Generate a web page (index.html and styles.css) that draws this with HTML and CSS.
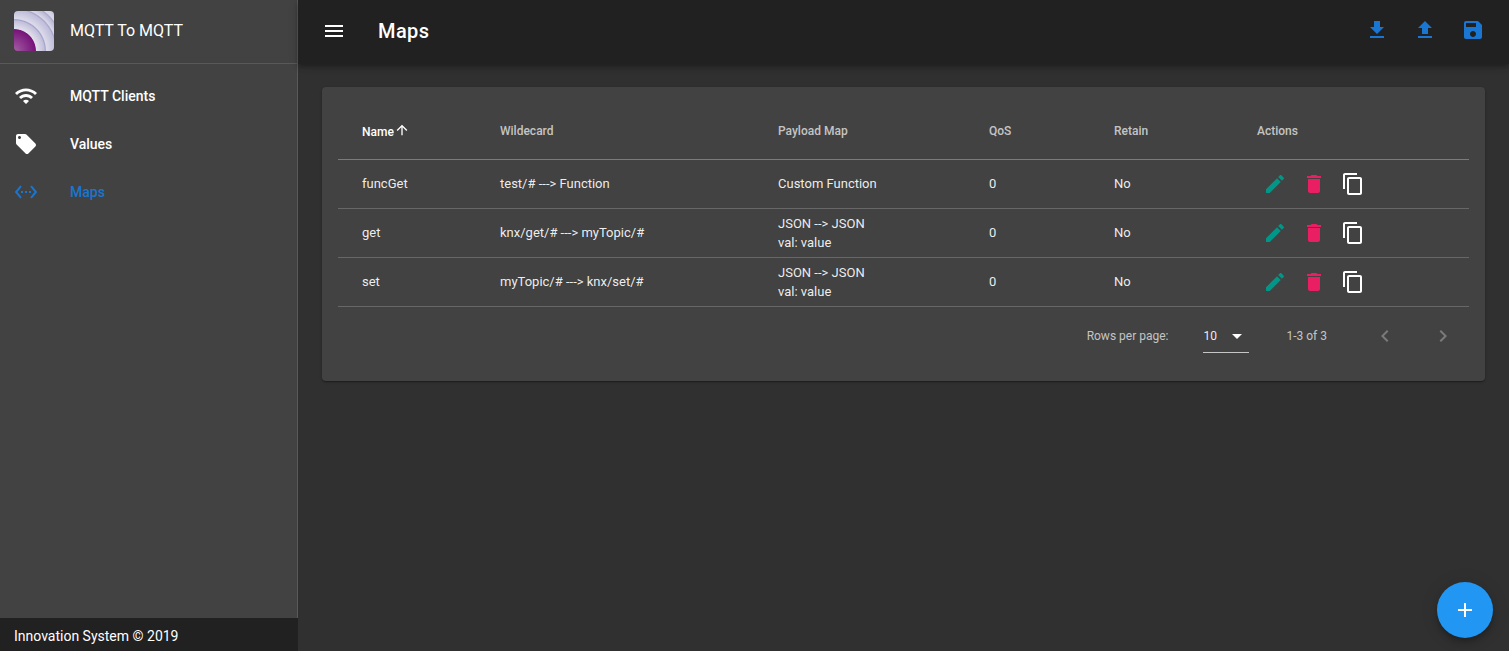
FILE: index.html
```html
<!DOCTYPE html>
<html>
<head>
    <meta charset="utf-8">
    <meta name="viewport" content="width=device-width, initial-scale=1.0">
    <title>MQTT To MQTT</title>
    <link rel="stylesheet" href="styles.css">
</head>
<body>
    <svg class="icon-defs" width="0" height="0">
        <symbol id="i-edit" viewBox="0 0 24 24"><path d="M3 17.25V21h3.75L17.81 9.94l-3.75-3.75L3 17.25zM20.71 7.04c.39-.39.39-1.02 0-1.41l-2.34-2.34c-.39-.39-1.02-.39-1.41 0l-1.83 1.83 3.75 3.75 1.83-1.83z"/></symbol>
        <symbol id="i-delete" viewBox="0 0 24 24"><path d="M6 19c0 1.1.9 2 2 2h8c1.1 0 2-.9 2-2V7H6v12zM19 4h-3.5l-1-1h-5l-1 1H5v2h14V4z"/></symbol>
        <symbol id="i-copy" viewBox="0 0 24 24"><path d="M16 1H4c-1.1 0-2 .9-2 2v14h2V3h12V1zm3 4H8c-1.1 0-2 .9-2 2v14c0 1.1.9 2 2 2h11c1.1 0 2-.9 2-2V7c0-1.1-.9-2-2-2zm0 16H8V7h11v14z"/></symbol>
    </svg>

    <div class="app">
        <aside class="sidebar">
            <div class="sidebar-main">
                <div class="brand">
                    <svg class="logo" viewBox="0 0 40 40">
                        <defs>
                            <radialGradient id="logo-bands" gradientUnits="userSpaceOnUse" cx="0" cy="40" r="58">
                                <stop offset="0" stop-color="#a45ea4"/>
                                <stop offset="0.37" stop-color="#761379"/>
                                <stop offset="0.385" stop-color="#e2dfec"/>
                                <stop offset="0.52" stop-color="#c2c0da"/>
                                <stop offset="0.54" stop-color="#a3a1c8"/>
                                <stop offset="0.56" stop-color="#dcdaea"/>
                                <stop offset="0.71" stop-color="#bfbdd9"/>
                                <stop offset="0.73" stop-color="#a6a4ca"/>
                                <stop offset="0.75" stop-color="#d9d7e8"/>
                                <stop offset="0.83" stop-color="#bcbad6"/>
                                <stop offset="0.85" stop-color="#a9a7cc"/>
                                <stop offset="0.87" stop-color="#d9d7e8"/>
                                <stop offset="1" stop-color="#c0bedb"/>
                            </radialGradient>
                        </defs>
                        <rect width="40" height="40" rx="4" fill="url(#logo-bands)"/>
                    </svg>
                    <span class="brand-name">MQTT To MQTT</span>
                </div>
                <nav class="nav">
                    <a href="#" class="nav-item">
                        <svg class="nav-icon" viewBox="0 0 24 24"><path d="M1 9l2 2c4.97-4.97 13.03-4.97 18 0l2-2C16.93 2.93 7.08 2.93 1 9zm8 8l3 3 3-3c-1.65-1.66-4.34-1.66-6 0zm-4-4l2 2c2.76-2.76 7.24-2.76 10 0l2-2C15.14 9.14 8.87 9.14 5 13z"/></svg>
                        <span>MQTT Clients</span>
                    </a>
                    <a href="#" class="nav-item">
                        <svg class="nav-icon" viewBox="0 0 24 24"><path d="M21.41 11.58l-9-9C12.05 2.22 11.55 2 11 2H4c-1.1 0-2 .9-2 2v7c0 .55.22 1.05.59 1.42l9 9c.36.36.86.58 1.41.58.55 0 1.05-.22 1.41-.59l7-7c.37-.36.59-.86.59-1.41 0-.55-.23-1.06-.59-1.42zM5.5 7C4.67 7 4 6.33 4 5.5S4.67 4 5.5 4 7 4.67 7 5.5 6.33 7 5.5 7z"/></svg>
                        <span>Values</span>
                    </a>
                    <a href="#" class="nav-item active">
                        <svg class="nav-icon" viewBox="0 0 24 24"><path d="M7.77 6.76L6.23 5.48.82 12l5.41 6.52 1.54-1.28L3.42 12l4.35-5.24zM7 13h2v-2H7v2zm10-2h-2v2h2v-2zm-6 2h2v-2h-2v2zm6.77-7.52l-1.54 1.28L20.58 12l-4.35 5.24 1.54 1.28L23.18 12l-5.41-6.52z"/></svg>
                        <span>Maps</span>
                    </a>
                </nav>
            </div>
            <div class="sidebar-footer">Innovation System © 2019</div>
        </aside>

        <div class="content">
            <header class="topbar">
                <svg class="menu-icon" viewBox="0 0 24 24"><path d="M3 18h18v-2H3v2zm0-5h18v-2H3v2zm0-7v2h18V6H3z"/></svg>
                <h1 class="page-title">Maps</h1>
                <div class="topbar-actions">
                    <button class="topbar-button"><svg viewBox="0 0 24 24"><path d="M19 9h-4V3H9v6H5l7 7 7-7zM5 18v2h14v-2H5z"/></svg></button>
                    <button class="topbar-button"><svg viewBox="0 0 24 24"><path d="M9 16h6v-6h4l-7-7-7 7h4zm-4 2h14v2H5z"/></svg></button>
                    <button class="topbar-button"><svg viewBox="0 0 24 24"><path d="M17 3H5c-1.11 0-2 .9-2 2v14c0 1.1.89 2 2 2h14c1.1 0 2-.9 2-2V7l-4-4zm-5 16c-1.66 0-3-1.34-3-3s1.34-3 3-3 3 1.34 3 3-1.34 3-3 3zm3-10H5V5h10v4z"/></svg></button>
                </div>
            </header>

            <main class="main">
                <section class="card">
                    <table class="maps-table">
                        <colgroup>
                            <col class="col-name">
                            <col class="col-wildcard">
                            <col class="col-payload">
                            <col class="col-qos">
                            <col class="col-retain">
                            <col>
                        </colgroup>
                        <thead>
                            <tr>
                                <th class="sorted">Name<svg class="sort-icon" viewBox="0 0 24 24"><path d="M4 12l1.41 1.41L11 7.83V20h2V7.83l5.58 5.59L20 12l-8-8-8 8z"/></svg></th>
                                <th>Wildecard</th>
                                <th>Payload Map</th>
                                <th>QoS</th>
                                <th>Retain</th>
                                <th>Actions</th>
                            </tr>
                        </thead>
                        <tbody>
                            <tr>
                                <td>funcGet</td>
                                <td>test/# ---&gt; Function</td>
                                <td>Custom Function</td>
                                <td>0</td>
                                <td>No</td>
                                <td>
                                    <div class="actions">
                                        <svg class="action edit"><use href="#i-edit"/></svg>
                                        <svg class="action delete"><use href="#i-delete"/></svg>
                                        <svg class="action copy"><use href="#i-copy"/></svg>
                                    </div>
                                </td>
                            </tr>
                            <tr>
                                <td>get</td>
                                <td>knx/get/# ---&gt; myTopic/#</td>
                                <td>JSON --&gt; JSON<br>val: value</td>
                                <td>0</td>
                                <td>No</td>
                                <td>
                                    <div class="actions">
                                        <svg class="action edit"><use href="#i-edit"/></svg>
                                        <svg class="action delete"><use href="#i-delete"/></svg>
                                        <svg class="action copy"><use href="#i-copy"/></svg>
                                    </div>
                                </td>
                            </tr>
                            <tr>
                                <td>set</td>
                                <td>myTopic/# ---&gt; knx/set/#</td>
                                <td>JSON --&gt; JSON<br>val: value</td>
                                <td>0</td>
                                <td>No</td>
                                <td>
                                    <div class="actions">
                                        <svg class="action edit"><use href="#i-edit"/></svg>
                                        <svg class="action delete"><use href="#i-delete"/></svg>
                                        <svg class="action copy"><use href="#i-copy"/></svg>
                                    </div>
                                </td>
                            </tr>
                        </tbody>
                    </table>
                    <div class="pagination">
                        <span class="rows-label">Rows per page:</span>
                        <div class="rows-select">
                            <span>10</span>
                            <svg viewBox="0 0 24 24"><path d="M7 10l5 5 5-5z"/></svg>
                        </div>
                        <span class="page-range">1-3 of 3</span>
                        <svg class="page-arrow prev" viewBox="0 0 24 24"><path d="M15.41 7.41L14 6l-6 6 6 6 1.41-1.41L10.83 12z"/></svg>
                        <svg class="page-arrow next" viewBox="0 0 24 24"><path d="M10 6L8.59 7.41 13.17 12l-4.58 4.58L10 18l6-6z"/></svg>
                    </div>
                </section>
            </main>
        </div>
    </div>

    <button class="fab"><svg viewBox="0 0 24 24"><path d="M19 13h-6v6h-2v-6H5v-2h6V5h2v6h6v2z"/></svg></button>
</body>
</html>
```

FILE: styles.css
```css
* {
    box-sizing: border-box;
}

html, body {
    height: 100%;
}

body {
    font-family: Roboto, "Liberation Sans", sans-serif;
    margin: 0;
    padding: 0;
    background-color: #303030;
    color: #ffffff;
    overflow: hidden;
}

svg {
    fill: currentColor;
}

.icon-defs {
    position: absolute;
}

.app {
    display: flex;
    height: 100%;
}

/* sidebar */

.sidebar {
    width: 298px;
    flex-shrink: 0;
    display: flex;
    flex-direction: column;
    background-color: #424242;
}

.sidebar-main {
    flex: 1;
    border-right: 1px solid rgba(255, 255, 255, 0.12);
}

.brand {
    display: flex;
    align-items: center;
    height: 64px;
    padding: 0 14px 2px;
    border-bottom: 1px solid rgba(255, 255, 255, 0.12);
}

.logo {
    width: 40px;
    height: 40px;
    margin-right: 16px;
}

.brand-name {
    font-size: 16px;
}

.nav {
    padding-top: 8px;
}

.nav-item {
    display: flex;
    align-items: center;
    height: 48px;
    padding: 0 14px;
    font-size: 14px;
    font-weight: 500;
    color: #ffffff;
    text-decoration: none;
}

.nav-item.active {
    color: #1976d2;
}

.nav-icon {
    width: 24px;
    height: 24px;
    margin-right: 32px;
}

.sidebar-footer {
    height: 33px;
    padding-left: 14px;
    font-size: 14px;
    line-height: 36px;
    background-color: #212121;
}

/* top bar */

.content {
    flex: 1;
    min-width: 0;
    display: flex;
    flex-direction: column;
}

.topbar {
    display: flex;
    align-items: center;
    height: 64px;
    flex-shrink: 0;
    padding: 0 12px 2px 24px;
    background-color: #212121;
    box-shadow: 0 2px 4px -1px rgba(0, 0, 0, 0.2), 0 4px 5px 0 rgba(0, 0, 0, 0.14), 0 1px 10px 0 rgba(0, 0, 0, 0.12);
}

.menu-icon {
    width: 24px;
    height: 24px;
    margin-right: 32px;
}

.page-title {
    margin: 0;
    flex: 1;
    font-size: 20px;
    font-weight: 500;
    letter-spacing: 0.4px;
}

.topbar-actions {
    display: flex;
}

.topbar-button {
    width: 48px;
    height: 48px;
    padding: 12px;
    margin-bottom: 2px;
    border: none;
    background: none;
    color: #1976d2;
}

.topbar-button svg {
    display: block;
    width: 24px;
    height: 24px;
}

/* table card */

.main {
    flex: 1;
    padding: 23px 24px 24px;
}

.card {
    padding: 16px;
    background-color: #424242;
    border-radius: 4px;
    box-shadow: 0 1px 3px 0 rgba(0, 0, 0, 0.2), 0 1px 1px 0 rgba(0, 0, 0, 0.14), 0 2px 1px -1px rgba(0, 0, 0, 0.12);
}

.maps-table {
    width: 100%;
    table-layout: fixed;
    border-collapse: collapse;
    font-size: 13px;
    color: rgba(255, 255, 255, 0.92);
}

.col-name {
    width: 138px;
}

.col-wildcard {
    width: 278px;
}

.col-payload {
    width: 211px;
}

.col-qos {
    width: 125px;
}

.col-retain {
    width: 143px;
}

.maps-table th {
    height: 56px;
    padding: 0 0 0 24px;
    font-size: 12px;
    font-weight: 500;
    text-align: left;
    color: rgba(255, 255, 255, 0.7);
    border-bottom: 1px solid rgba(255, 255, 255, 0.3);
}

.maps-table th.sorted {
    color: #ffffff;
}

.sort-icon {
    width: 16px;
    height: 16px;
    vertical-align: -2px;
}

.maps-table td {
    height: 49px;
    padding: 0 0 0 24px;
    line-height: 19px;
    border-bottom: 1px solid rgba(255, 255, 255, 0.2);
}

.actions {
    display: flex;
    gap: 15px;
    padding-left: 6px;
}

.action {
    width: 24px;
    height: 24px;
}

.edit {
    color: #009688;
}

.delete {
    color: #e91e63;
}

.copy {
    color: #ffffff;
}

/* pagination */

.pagination {
    display: flex;
    align-items: center;
    justify-content: flex-end;
    height: 58px;
    font-size: 12px;
    color: rgba(255, 255, 255, 0.7);
}

.rows-label {
    margin-right: 35px;
}

.rows-select {
    display: flex;
    align-items: center;
    justify-content: space-between;
    width: 46px;
    height: 32px;
    margin-top: 2px;
    color: rgba(255, 255, 255, 0.92);
    border-bottom: 1px solid rgba(255, 255, 255, 0.7);
}

.rows-select svg {
    width: 24px;
    height: 24px;
    color: #ffffff;
}

.page-range {
    margin-left: 37px;
    margin-right: 46px;
}

.page-arrow {
    width: 24px;
    height: 24px;
    color: rgba(255, 255, 255, 0.3);
}

.page-arrow.next {
    margin-left: 34px;
    margin-right: 14px;
}

/* add button */

.fab {
    position: fixed;
    right: 16px;
    bottom: 13px;
    width: 56px;
    height: 56px;
    padding: 16px;
    border: none;
    border-radius: 50%;
    color: #ffffff;
    background-color: #2196f3;
    box-shadow: 0 3px 5px -1px rgba(0, 0, 0, 0.2), 0 6px 10px 0 rgba(0, 0, 0, 0.14), 0 1px 18px 0 rgba(0, 0, 0, 0.12);
}

.fab svg {
    display: block;
    width: 24px;
    height: 24px;
}
```
